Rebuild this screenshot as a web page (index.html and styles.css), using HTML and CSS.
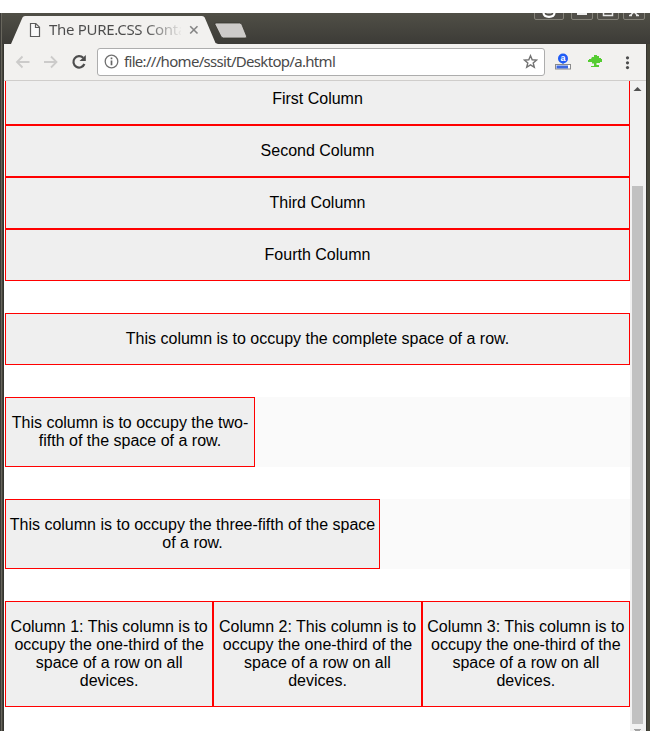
FILE: index.html
```html
<!DOCTYPE html>
<html lang="en">
<head>
<meta charset="utf-8">
<title>The PURE.CSS Container</title>
<link rel="stylesheet" href="styles.css">
</head>
<body>
<div class="window">
  <header class="tabstrip">
    <div class="tab">
      <svg class="tab-shape" width="208" height="31" viewBox="0 0 208 31"><path d="M0 31 L11.5 4.5 Q12.200 3 14 3 H191 Q193 3 193.700 4.500 L204.500 30 L207 31Z" fill="#f2f1ef"/></svg>
      <svg class="file-icon" width="12" height="16" viewBox="0 0 12 16"><path d="M1.500 1.500H6.800L10.500 5.200V14.500H1.500ZM6.500 1.500V5.500H10.500" fill="#fafafa" stroke="#5c5c5c" stroke-width="1.200"/></svg>
      <span class="tab-title">The PURE.CSS Conta</span>
      <svg class="tab-close" width="10" height="10" viewBox="0 0 10 10"><path d="M1.200 1.200L8.500 8.500M8.500 1.200L1.200 8.500" stroke="#858585" stroke-width="1.600"/></svg>
    </div>
    <svg class="new-tab" width="34" height="17" viewBox="0 0 34 17"><path d="M2 1H25.500Q27.300 1 28 2.800L32.500 14Q33.200 16 31 16H9.500Q7.500 16 6.800 14L1 2.500Q.4 1 2 1Z" fill="#cdcbc9" stroke="#383731" stroke-width=".8"/></svg>
    <svg class="controls" width="116" height="8" viewBox="0 0 116 8">
      <g fill="#514f49" stroke="#85837a"><path d="M.5-2V5Q.5 6.500 2 6.500H28Q29.500 6.500 29.500 5V-2ZM37.500-2V5Q37.500 6.500 39 6.500H57Q58.500 6.500 58.500 5V-2ZM63.500-2V5Q63.500 6.500 65 6.500H83Q84.500 6.500 84.500 5V-2ZM89.500-2V5Q89.500 6.500 91 6.500H109Q110.500 6.500 110.500 5V-2Z"/></g>
      <path d="M9.500 0C10 5.200 20 5.200 20.500 0" fill="none" stroke="#fff" stroke-width="2.200"/><path d="M12.500 0H17.500" stroke="#ddd"/>
      <path d="M43 1H53" stroke="#eee" stroke-width="2"/>
      <path d="M69.500-2V2.500H78.500V-2" fill="none" stroke="#e8e8e8" stroke-width="1.500"/>
      <path d="M96 2.800L100-1.200L104 2.800M95 2.500H98M102 2.500H105" fill="none" stroke="#e8e8e8" stroke-width="1.500"/>
    </svg>
  </header>
  <nav class="toolbar">
    <svg class="nav-icons" width="78" height="20" viewBox="0 0 78 20">
      <path d="M15.500 10H2.800M8.500 4.500L3 10L8.500 15.500M30 10H42.700M37 4.500L42.500 10L37 15.500" fill="none" stroke="#cccbca" stroke-width="1.800"/>
      <path d="M69.200 5.800A5.700 5.700 0 1 0 70.400 12" fill="none" stroke="#4d4d4d" stroke-width="2.200"/><path d="M71.800 3V9H65.500Z" fill="#4d4d4d"/>
    </svg>
    <div class="address">
      <svg width="15" height="15" viewBox="0 0 15 15"><circle cx="7.500" cy="7.500" r="6.300" fill="none" stroke="#717171" stroke-width="1.300"/><path d="M7.500 6.500V11.300M7.500 3.500V5.200" stroke="#666" stroke-width="1.700"/></svg>
      <span class="url">file:///home/sssit/Desktop/a.html</span>
      <svg class="star" width="15" height="15" viewBox="0 0 15 15"><path d="M7.500 1.700L9.200 5.800L13.600 6.100L10.200 9L11.300 13.300L7.500 10.900L3.700 13.300L4.800 9L1.400 6.100L5.800 5.800Z" fill="none" stroke="#737373" stroke-width="1.400"/></svg>
    </div>
    <svg class="extensions" width="80" height="18" viewBox="0 0 80 18">
      <circle cx="8" cy="5.500" r="5" fill="#205cf5"/><text class="badge-letter" x="8" y="8.300" text-anchor="middle">a</text>
      <path d="M8 10V12" stroke="#205cf5"/><rect x=".5" y="11.500" width="15" height="4.500" fill="#fff" stroke="#8a8a8a"/><rect x="1.500" y="12.500" width="11.500" height="3" fill="#3d68e0"/>
      <path d="M37 4H39V2H42V3H44V5H46V6H47V9H45V10H41.500V12H44V14H36V13H39V10.500H37V9H33V7H34V6H36Z" fill="#55cc32"/>
      <g fill="#4c4c4c"><circle cx="72.500" cy="4.800" r="1.600"/><circle cx="72.500" cy="9.800" r="1.600"/><circle cx="72.500" cy="14.600" r="1.600"/></g>
    </svg>
  </nav>
  <div class="viewport">
    <main class="page">
      <section class="row">
        <div class="cell full clipped">First Column</div>
        <div class="cell full">Second Column</div>
        <div class="cell full">Third Column</div>
        <div class="cell full">Fourth Column</div>
      </section>
      <section class="row"><div class="cell full">This column is to occupy the complete space of a row.</div></section>
      <section class="row shaded"><div class="cell two-fifths">This column is to occupy the two-fifth of the space of a row.</div></section>
      <section class="row shaded"><div class="cell three-fifths">This column is to occupy the three-fifth of the space of a row.</div></section>
      <section class="row">
        <div class="cell third">Column 1: This column is to occupy the one-third of the space of a row on all devices.</div>
        <div class="cell third">Column 2: This column is to occupy the one-third of the space of a row on all devices.</div>
        <div class="cell third">Column 3: This column is to occupy the one-third of the space of a row on all devices.</div>
      </section>
    </main>
    <aside class="scrollbar">
      <svg width="16" height="15" viewBox="0 0 16 15"><path d="M3.500 10L7.500 6L11.500 10Z" fill="#505050"/></svg>
      <div class="thumb"></div>
      <svg width="16" height="7" viewBox="0 0 16 7"><path d="M4 5H11V6H10V7H5V6H4Z" fill="#a3a3a3"/></svg>
    </aside>
  </div>
</div>
</body>
</html>
```

FILE: styles.css
```css
* { box-sizing: border-box; }
body { margin: 0; background: #fff; overflow: hidden; }
svg { display: block; flex: none; }
.window {
  width: 650px;
  height: 718px;
  margin-top: 13px;
  padding: 0 4px;
  background: linear-gradient(90deg, #3c3b37 0 1px, #68665d 1px 2px, #44433b 2px 3px, #35342f 3px 4px, #35342f 4px 647px, #464539 647px);
  display: flex;
  flex-direction: column;
}
.tabstrip {
  height: 31px;
  margin: 0 -4px 0 -2px;
  padding-left: 9px;
  display: flex;
  align-items: flex-start;
  background: linear-gradient(#504f46, #3c3b37);
}
.tab {
  position: relative;
  width: 208px;
  height: 31px;
  padding: 3px 0 0 18px;
  display: flex;
  align-items: center;
}
.tab-shape { position: absolute; left: 0; top: 0; }
.file-icon { position: relative; }
.tab-title {
  position: relative;
  width: 132px;
  margin: -2px 2px 0 8px;
  overflow: hidden;
  white-space: nowrap;
  font: 15px/20px "Noto Sans", sans-serif;
  letter-spacing: -0.3px;
  color: transparent;
  background: linear-gradient(90deg, #4c4c4c 96px, rgba(76, 76, 76, 0) 134px);
  -webkit-background-clip: text;
  background-clip: text;
}
.tab-close { position: relative; margin-left: 6px; }
.new-tab { margin: 9px 0 0 -5px; }
.controls { margin-left: auto; }
.toolbar {
  height: 37px;
  width: 642px;
  padding: 0 11px 1px 10px;
  border-bottom: 1px solid #cfcdcb;
  background: #f2f1ef;
  display: flex;
  align-items: center;
}
.address {
  width: 448px;
  height: 28px;
  margin-left: 5px;
  padding: 0 6px;
  border: 1px solid #adadad;
  border-radius: 3px;
  background: #fff;
  display: flex;
  align-items: center;
}
.url {
  margin: -2px 0 0 5px;
  font: 15px/20px "Noto Sans", sans-serif;
  letter-spacing: -0.69px;
  color: #4a4a4a;
  white-space: nowrap;
}
.star { margin-left: auto; }
.extensions { margin-left: 10px; }
.badge-letter { font: bold 9px "Liberation Sans", sans-serif; fill: #fff; }
.viewport { height: 650px; display: flex; background: #fff; }
.page {
  width: 626px;
  padding-left: 1px;
  font: 16px/18px "Liberation Sans", Arial, sans-serif;
  color: #000;
  text-align: center;
}
.row { display: flex; flex-wrap: wrap; margin-bottom: 32px; }
.shaded { background: #fafafa; }
.cell { padding: 16px 0; border: 1px solid #f00; background: #efefef; }
.full { width: 100%; }
.clipped { padding-top: 9px; border-top: 0; }
.two-fifths { width: 40%; }
.three-fifths { width: 60%; }
.third { width: 33.3333%; padding-left: 4px; padding-right: 4px; }
.scrollbar { width: 16px; background: #f1f1f1; }
.thumb { width: 11px; height: 538px; margin: 90px 0 0 2px; background: #c1c1c1; }
```
